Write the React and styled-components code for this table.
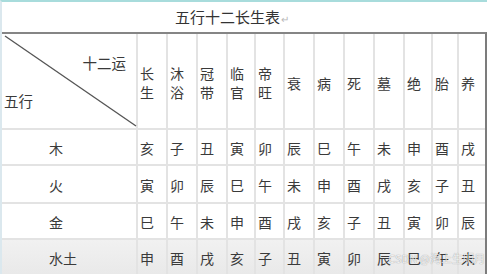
import React from 'react';
import styled, { createGlobalStyle } from 'styled-components';

const GlobalStyle = createGlobalStyle`
  html, body {
    margin: 0;
    padding: 0;
    background: #fff;
    overflow: hidden;
  }
  body {
    font-family: "Noto Sans CJK SC", "Noto Sans", sans-serif;
    color: #3a3a3a;
  }
`

const Page = styled.div`
  position: relative;
  width: 487px;
  height: 274px;
  box-sizing: border-box;
  border-top: 2px solid #a8dcdc;
  border-left: 2px solid #dbe8ee;
  overflow: hidden;
`

const Title = styled.div`
  height: 30px;
  padding-left: 173px;
  font-size: 15px;
  line-height: 30px;
  letter-spacing: 0;
  color: #333;
`

const Mark = styled.span`
  font-size: 10px;
  color: #b8b8b8;
  margin-left: 1px;
`

const Table = styled.div`
  display: grid;
  grid-template-columns: 134px 30px 30px 30px 28px 29px 30px 30px 30px 30px 28px 26px 28px;
  grid-template-rows: 96px 36px 38px 36px 36px;
  border-top: 2px solid #858585;
  border-right: 2px solid #7c7c7c;
`

const Cell = styled.div`
  box-sizing: border-box;
  display: flex;
  align-items: center;
  padding: ${p => (p.$head ? '4px 0 0 2px' : '3px 0 0 2px')};
  border-left: ${p => (p.$first ? 'none' : '2px solid #e3e3e3')};
  border-bottom: 2px solid #e3e3e3;
  background: ${p => (p.$shade ? 'linear-gradient(#f1f1f1, #e9e9e9)' : '#fff')};
  font-size: 14px;
  line-height: 19px;
`

const Stack = styled.div`
  display: flex;
  flex-direction: column;
`

const Corner = styled.div`
  position: relative;
  box-sizing: border-box;
  display: flex;
  flex-direction: column;
  padding-top: 21px;
  border-bottom: 2px solid #e3e3e3;
  font-size: 14.5px;
  line-height: 15px;
`

const Diagonal = styled.svg`
  position: absolute;
  left: 0;
  top: 0;
  width: 100%;
  height: 100%;
  overflow: visible;
`

const CornerTop = styled.span`
  align-self: flex-end;
  margin-right: 10px;
`

const CornerBottom = styled.span`
  margin-top: 23px;
  margin-left: 2px;
`

const RowLabel = styled(Cell)`
  padding-left: 47px;
`

const Watermark = styled.div`
  position: absolute;
  right: 2px;
  bottom: 8px;
  font-size: 11px;
  color: rgba(255, 255, 255, 0.85);
  text-shadow: 0 0 1px rgba(0, 0, 0, 0.45);
  font-family: "Noto Sans CJK SC", "Noto Sans", sans-serif;
`

const heads = ['长生', '沐浴', '冠带', '临官', '帝旺', '衰', '病', '死', '墓', '绝', '胎', '养'];

const rows = [
  { name: '木', cells: ['亥', '子', '丑', '寅', '卯', '辰', '巳', '午', '未', '申', '酉', '戌'] },
  { name: '火', cells: ['寅', '卯', '辰', '巳', '午', '未', '申', '酉', '戌', '亥', '子', '丑'] },
  { name: '金', cells: ['巳', '午', '未', '申', '酉', '戌', '亥', '子', '丑', '寅', '卯', '辰'] },
  { name: '水土', cells: ['申', '酉', '戌', '亥', '子', '丑', '寅', '卯', '辰', '巳', '午', '未'] },
];

const App = () => {
  return (
    <Page>
      <GlobalStyle />
      <Title>五行十二长生表<Mark>↵</Mark></Title>
      <Table>
        <Corner>
          <Diagonal viewBox="0 0 134 96" preserveAspectRatio="none">
            <line x1="3" y1="2" x2="134" y2="94" stroke="#555" strokeWidth="1.3" />
          </Diagonal>
          <CornerTop>十二运</CornerTop>
          <CornerBottom>五行</CornerBottom>
        </Corner>
        {heads.map((h, i) => (
          <Cell key={'h' + i} $head>
            <Stack>
              {h.split('').map((c, j) => <span key={j}>{c}</span>)}
            </Stack>
          </Cell>
        ))}
        {rows.map((r, ri) => (
          <React.Fragment key={r.name}>
            <RowLabel $first $shade={ri === 3}>{r.name}</RowLabel>
            {r.cells.map((c, ci) => (
              <Cell key={ci} $shade={ri === 3}>{c}</Cell>
            ))}
          </React.Fragment>
        ))}
      </Table>
      <Watermark>CSDN @海上生明月</Watermark>
    </Page>
  );
}

export default App;
